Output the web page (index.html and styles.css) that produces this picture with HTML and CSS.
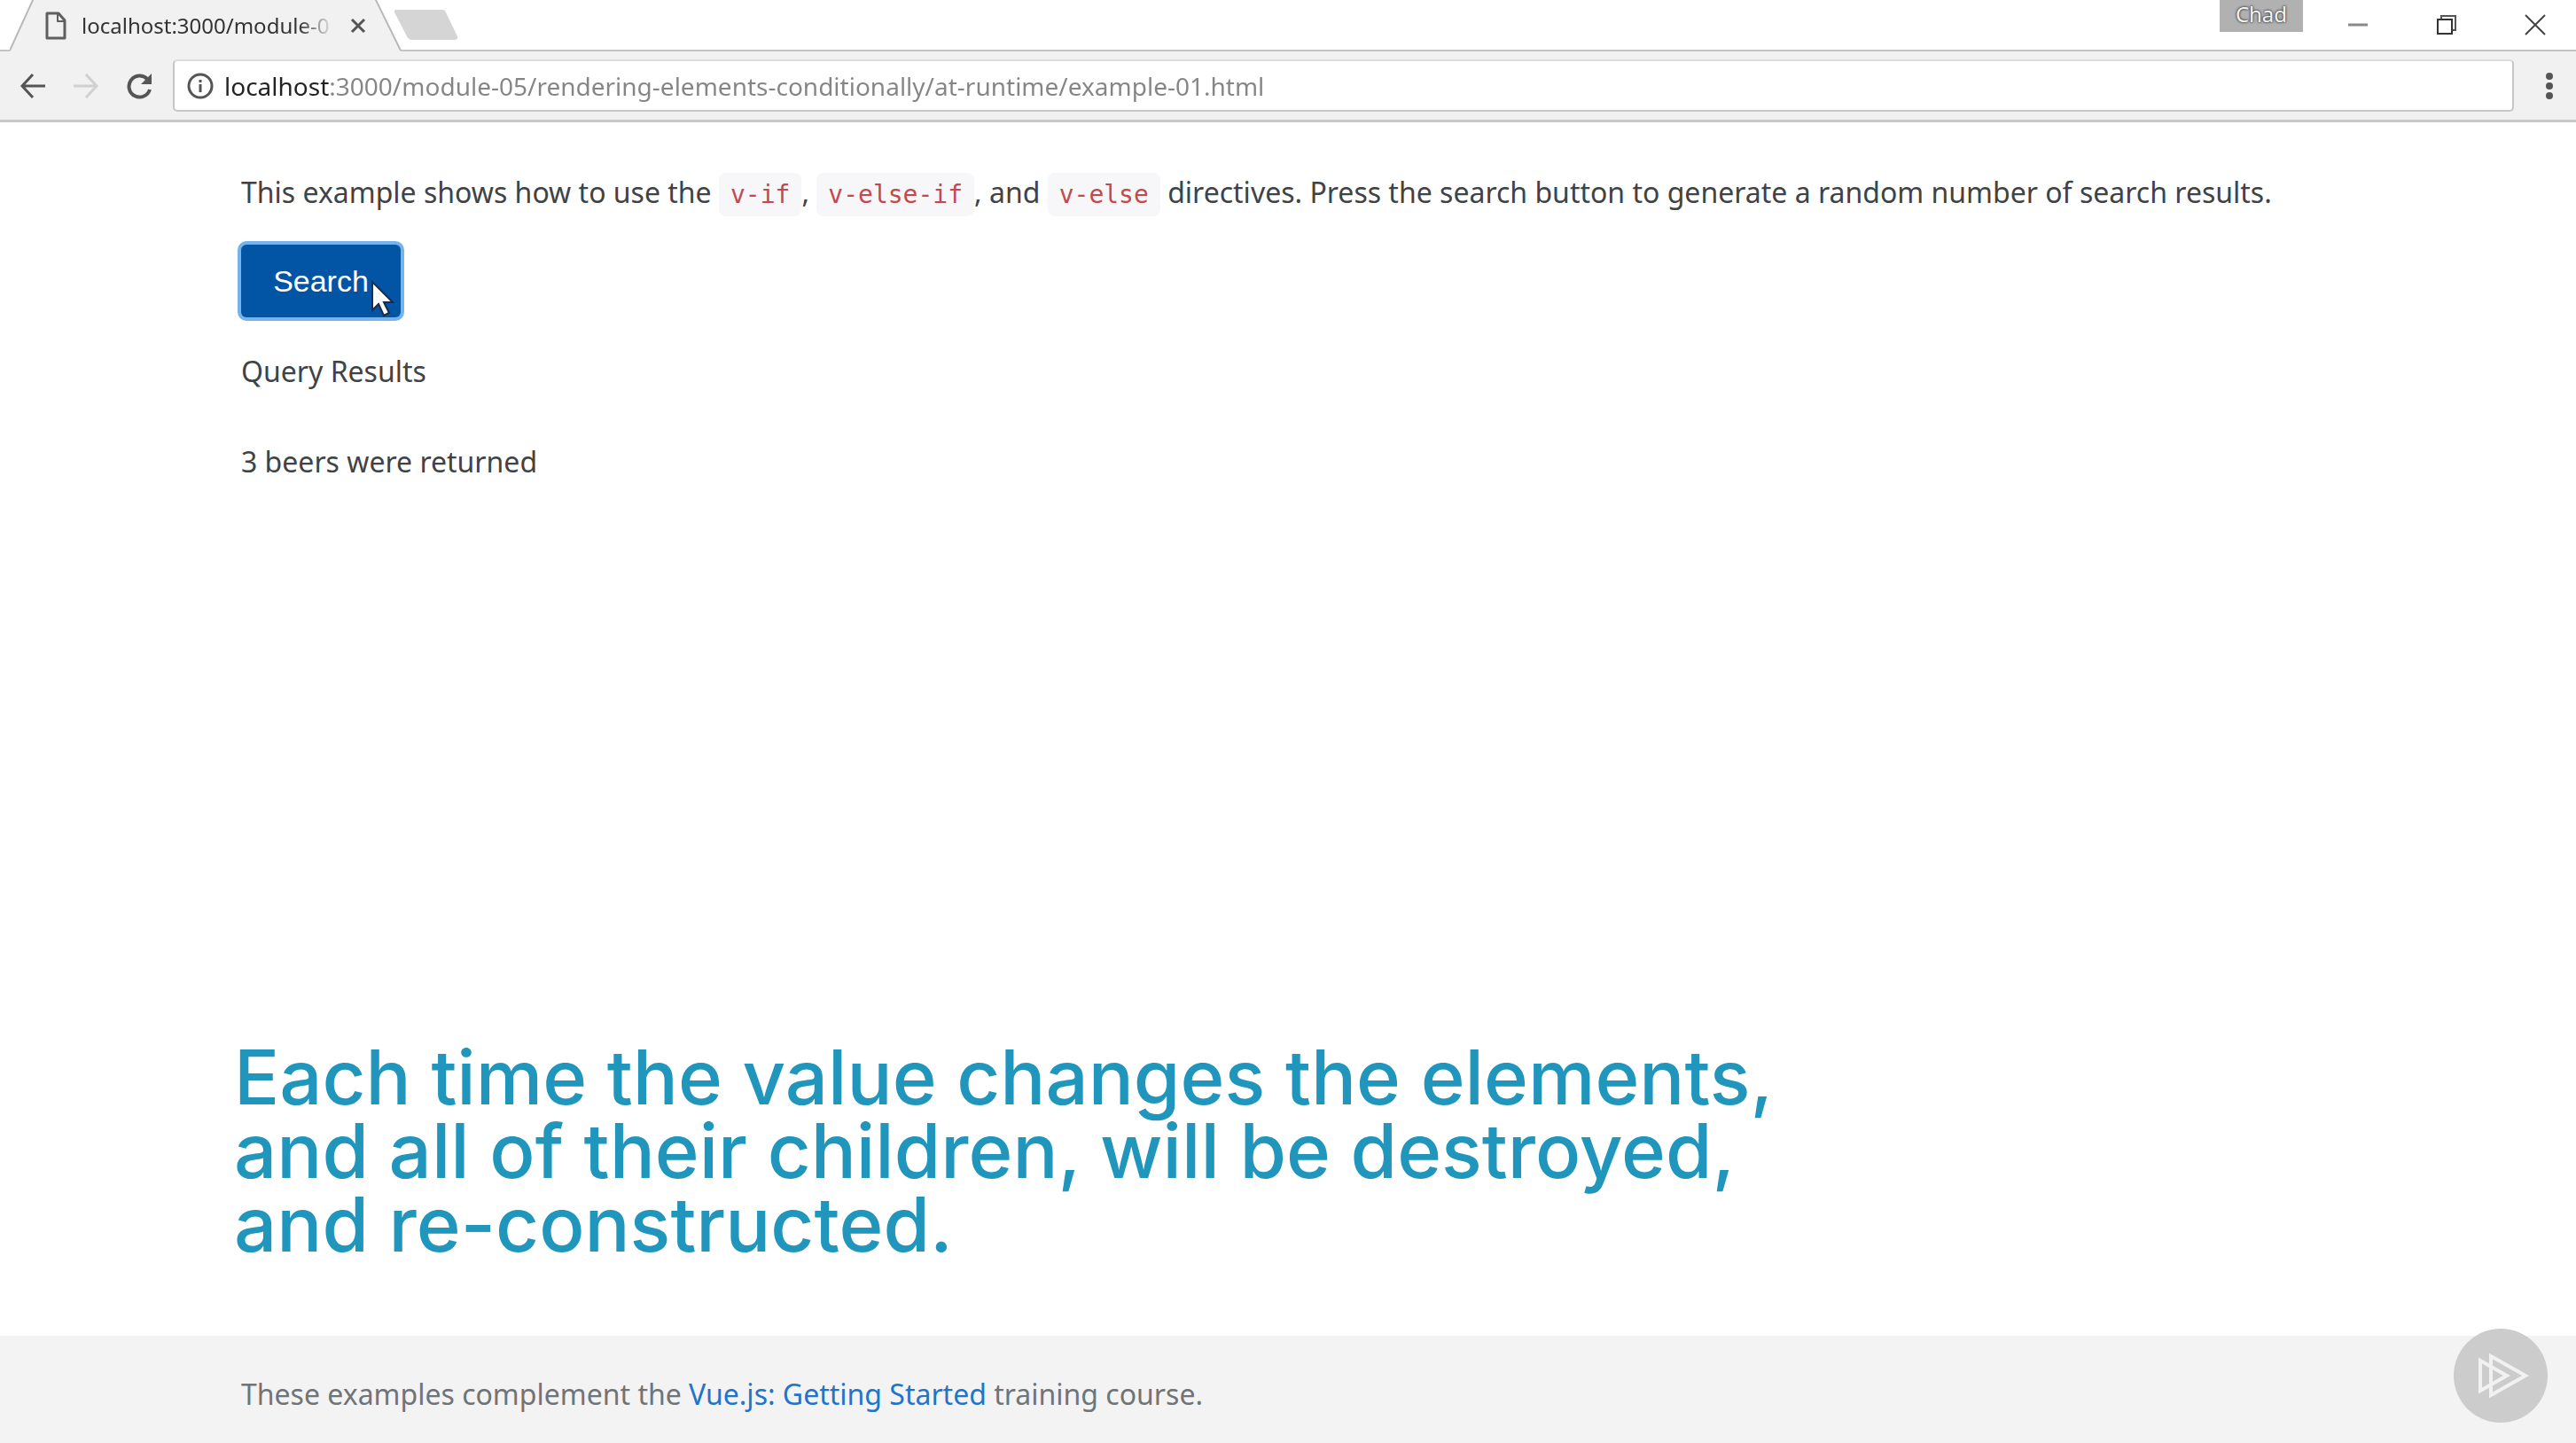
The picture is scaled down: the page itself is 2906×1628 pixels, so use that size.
FILE: index.html
```html
<!DOCTYPE html>
<html lang="en">
<head>
<meta charset="utf-8">
<meta name="viewport" content="width=device-width, initial-scale=1">
<title>Rendering elements conditionally</title>
<link rel="stylesheet" href="styles.css">
</head>
<body>
<header class="browser">
  <div class="tab-strip">
    <div class="tab">
      <svg class="tab-shape" width="442" height="58" viewBox="0 0 442 58" aria-hidden="true">
        <path d="M0 58 L27 -2 H412 L441 58Z" fill="#f1f1f1"/>
        <path d="M0 57 L27 -2 M412 -2 L441 57" fill="none" stroke="#b9b9b9" stroke-width="2"/>
      </svg>
      <svg class="tab-file" width="24" height="32" viewBox="0 0 24 32" fill="none" stroke="#5f5f5f" stroke-width="3" stroke-linejoin="round" aria-hidden="true">
        <path d="M2 2h13l7 8v20H2z"/><path d="M14 2v9h8" stroke-width="2"/>
      </svg>
      <span class="tab-title">localhost:3000/module-0</span>
      <button class="icon-button" type="button" aria-label="Close tab">
        <svg width="18" height="18" viewBox="0 0 18 18" stroke="#555" stroke-width="3"><path d="M2 2l14 14M16 2L2 16"/></svg>
      </button>
    </div>
    <button class="icon-button new-tab" type="button" aria-label="New tab">
      <svg width="74" height="36" viewBox="0 0 74 36"><path d="M4 1H56q3 0 4 3L73 31q1 3-2 4H22q-4 0-6-4L2 4q-1-3 2-3z" fill="#d5d5d5"/></svg>
    </button>
    <div class="window-controls">
      <button class="profile" type="button">Chad</button>
      <button class="icon-button" type="button" aria-label="Minimize">
        <svg width="24" height="24" viewBox="0 0 24 24"><path d="M1 12h22" stroke="#8a8a8a" stroke-width="3"/></svg>
      </button>
      <button class="icon-button" type="button" aria-label="Restore">
        <svg width="24" height="24" viewBox="0 0 24 24" fill="none" stroke="#333" stroke-width="2"><path d="M6 5V2h16v16h-4" stroke="#555"/><path d="M2 6h16v16H2z"/></svg>
      </button>
      <button class="icon-button" type="button" aria-label="Close">
        <svg width="24" height="24" viewBox="0 0 24 24" stroke="#444" stroke-width="2"><path d="M1 1l22 22M23 1L1 23"/></svg>
      </button>
    </div>
  </div>
  <div class="toolbar">
    <nav class="history">
      <button class="icon-button" type="button" aria-label="Back">
        <svg width="30" height="30" viewBox="0 0 30 30" fill="none" stroke="#555" stroke-width="3"><path d="M29 15H3M15 2L3 15l12 13"/></svg>
      </button>
      <button class="icon-button" type="button" aria-label="Forward" disabled>
        <svg width="30" height="30" viewBox="0 0 30 30" fill="none" stroke="#d0d0d0" stroke-width="3"><path d="M1 15h26M15 2l12 13-12 13"/></svg>
      </button>
      <button class="icon-button" type="button" aria-label="Reload">
        <svg width="30" height="30" viewBox="0 0 30 30"><path d="M24 7A12 12 0 1 0 27 19" fill="none" stroke="#555" stroke-width="4"/><path d="M29 1v12H17z" fill="#555"/></svg>
      </button>
    </nav>
    <div class="omnibox">
      <svg width="30" height="30" viewBox="0 0 30 30" fill="none" stroke="#555" stroke-width="3" aria-hidden="true"><circle cx="15" cy="15" r="13"/><path d="M15 13v9M15 8v3"/></svg>
      <input class="address" type="text" aria-label="Address" value="localhost:3000/module-05/rendering-elements-conditionally/at-runtime/example-01.html">
    </div>
    <button class="icon-button" type="button" aria-label="Menu">
      <svg width="8" height="30" viewBox="0 0 8 30" fill="#555"><circle cx="4" cy="4" r="4"/><circle cx="4" cy="15" r="4"/><circle cx="4" cy="26" r="4"/></svg>
    </button>
  </div>
</header>
<main class="content">
  <p class="intro">This example shows how to use the <code>v-if</code>, <code>v-else-if</code>, and <code>v-else</code> directives. Press the search button to generate a random number of search results.</p>
  <div class="search-row">
    <button class="search" type="button">Search</button>
    <svg class="cursor" width="28" height="42" viewBox="0 0 28 42" aria-hidden="true"><path d="M2 2V34L9 27L15 40L21 37L15 25H25Z" fill="#fff" stroke="#1c2a44" stroke-width="2"/></svg>
  </div>
  <p class="result">Query Results</p>
  <p class="result">3 beers were returned</p>
  <p class="caption">Each time the value changes the elements,<br>and all of their children, will be destroyed,<br>and re-constructed.</p>
</main>
<footer class="footer">
  <p>These examples complement the <a href="#course">Vue.js: Getting Started</a> training course.</p>
  <svg class="badge" width="106" height="106" viewBox="0 0 106 106" role="img" aria-label="Pluralsight">
    <circle cx="53" cy="53" r="53" fill="#ccc"/>
    <path d="M42 31L81 53L42 75ZM30 36L60 53L30 70Z" fill="none" stroke="#f1f1f1" stroke-width="4"/>
  </svg>
</footer>
</body>
</html>
```
FILE: styles.css
```css
* {
  box-sizing: border-box;
}

body {
  display: flex;
  flex-direction: column;
  min-height: 100vh;
  margin: 0;
  background: #fff;
  color: #404346;
  font: 32px/50px "Noto Sans", "Open Sans", sans-serif;
}

p {
  margin: 0;
}

.icon-button {
  display: flex;
  padding: 0;
  border: 0;
  background: none;
}

/* Browser frame */
.tab-strip {
  display: flex;
  height: 58px;
  padding-left: 11px;
  border-bottom: 2px solid #c4c4c4;
}

.tab {
  position: relative;
  display: flex;
  align-items: center;
  width: 442px;
  height: 58px;
  padding: 0 40px;
}

.tab-shape {
  position: absolute;
  top: 0;
  left: 0;
}

.tab-file,
.tab .icon-button {
  position: relative;
}

.tab-title {
  position: relative;
  flex: 1;
  margin: 0 18px 0 17px;
  overflow: hidden;
  color: #333;
  font-size: 24px;
  line-height: 56px;
  white-space: nowrap;
  -webkit-mask-image: linear-gradient(90deg, #000 86%, transparent);
  mask-image: linear-gradient(90deg, #000 86%, transparent);
}

.new-tab {
  align-items: center;
  margin-left: -10px;
}

.window-controls {
  display: flex;
  align-items: center;
  gap: 76px;
  margin-left: auto;
  padding-right: 34px;
}

.profile {
  align-self: flex-start;
  width: 94px;
  height: 36px;
  margin-right: -26px;
  padding: 0 0 4px;
  border: 0;
  background: #b1b1b1;
  color: #f4f4f4;
  font: 24px/32px "Noto Sans", sans-serif;
  text-shadow: 0 0 3px #333, 0 0 2px #333;
}

.toolbar {
  display: flex;
  align-items: center;
  height: 80px;
  padding: 0 26px 0 22px;
  border-bottom: 3px solid #c8c8c8;
  background: #f1f1f1;
}

.history {
  display: flex;
  gap: 30px;
}

.omnibox {
  display: flex;
  flex: 1;
  align-items: center;
  gap: 12px;
  height: 59px;
  margin: 0 36px 0 23px;
  padding-left: 14px;
  border: 2px solid #c6c6c6;
  border-top-color: #dcdcdc;
  border-radius: 5px;
  background: #fff;
}

.address {
  flex: 1;
  height: 50px;
  padding: 0;
  border: 0;
  outline: 0;
  background: linear-gradient(90deg, #222 119px, #858585 119px);
  -webkit-background-clip: text;
  background-clip: text;
  color: transparent;
  font: 28px/50px "Noto Sans", sans-serif;
}

/* Page */
.content {
  display: flex;
  flex: 1;
  flex-direction: column;
  padding: 54px 264px 84px 272px;
}

code {
  padding: 8px 13px;
  border-radius: 8px;
  background: #f7f7f9;
  color: #c4494e;
  font: 28px "DejaVu Sans Mono", monospace;
}

.search-row {
  position: relative;
  margin: 34px 0 36px;
}

.search {
  display: block;
  width: 180px;
  height: 82px;
  padding: 0;
  border: 0;
  border-radius: 6px;
  outline: 0;
  background: #0254a5;
  box-shadow: 0 0 0 4px #74b3ec;
  color: #fff;
  font: 34px/82px "Liberation Sans", Arial, sans-serif;
}

.cursor {
  position: absolute;
  top: 40px;
  left: 146px;
}

.result {
  margin-bottom: 52px;
}

.caption {
  margin-top: auto;
  margin-left: -8px;
  color: #2096bd;
  font: 500 85px/83px Inter, "Open Sans", sans-serif;
}

.footer {
  position: relative;
  padding: 41px 272px 30px;
  background: #f3f3f3;
  color: #6f7478;
}

.footer a {
  color: #1f74cc;
  text-decoration: none;
}

.badge {
  position: absolute;
  top: -8px;
  right: 32px;
}
```
